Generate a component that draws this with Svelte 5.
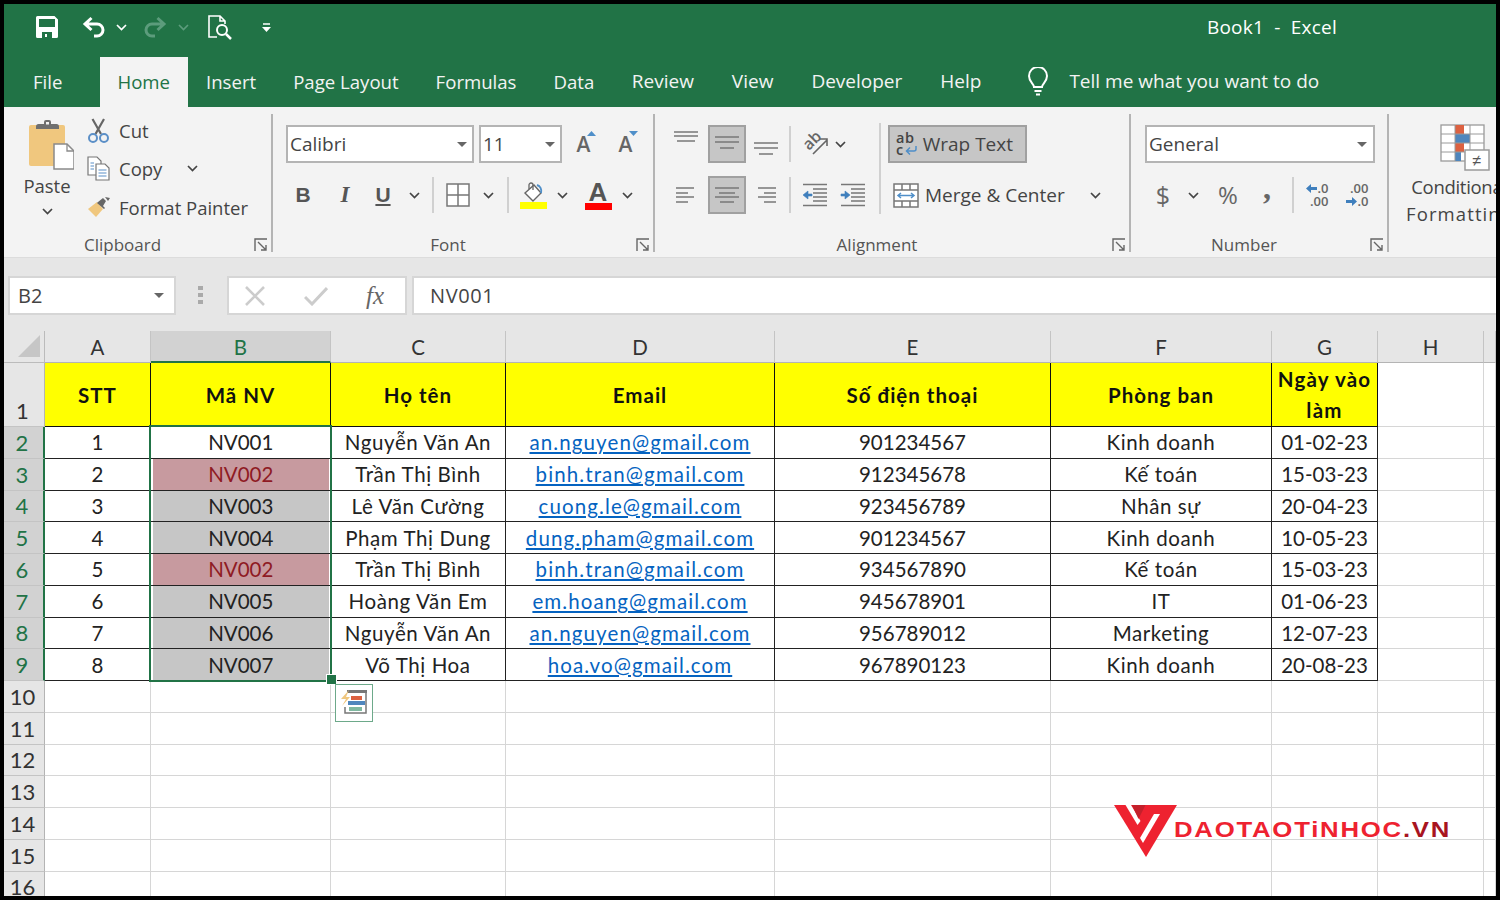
<script>
  // Excel window: Home ribbon over a staff list with duplicates highlighted in column B
  const tabs = ["Insert", "Page Layout", "Formulas", "Data", "Review", "View", "Developer", "Help"];
  const cols = ["A", "B", "C", "D", "E", "F", "G", "H"];
  const heads = ["STT", "Mã NV", "Họ tên", "Email", "Số điện thoại", "Phòng ban", "Ngày vào làm"];

  const staff = [
    [1, "NV001", "Nguyễn Văn An", "an.nguyen@gmail.com", "901234567", "Kinh doanh", "01-02-23", "plain"],
    [2, "NV002", "Trần Thị Bình", "binh.tran@gmail.com", "912345678", "Kế toán", "15-03-23", "dup"],
    [3, "NV003", "Lê Văn Cường", "cuong.le@gmail.com", "923456789", "Nhân sự", "20-04-23", "sel"],
    [4, "NV004", "Phạm Thị Dung", "dung.pham@gmail.com", "901234567", "Kinh doanh", "10-05-23", "sel"],
    [5, "NV002", "Trần Thị Bình", "binh.tran@gmail.com", "934567890", "Kế toán", "15-03-23", "dup"],
    [6, "NV005", "Hoàng Văn Em", "em.hoang@gmail.com", "945678901", "IT", "01-06-23", "sel"],
    [7, "NV006", "Nguyễn Văn An", "an.nguyen@gmail.com", "956789012", "Marketing", "12-07-23", "sel"],
    [8, "NV007", "Võ Thị Hoa", "hoa.vo@gmail.com", "967890123", "Kinh doanh", "20-08-23", "sel"],
  ];

  const emptyRows = [10, 11, 12, 13, 14, 15, 16];

  // [x1, x2, y] for the alignment glyphs
  const alignTop = [[1, 25, 2], [1, 25, 6], [4, 22, 11]];
  const alignMid = [[1, 25, 7], [1, 25, 12], [6, 20, 18]];
  const alignBot = [[1, 25, 13], [1, 25, 18], [6, 20, 24]];
  const alignLeft = [[3, 21, 5], [3, 15, 10], [3, 21, 14], [3, 15, 19]];
  const alignCenter = [[1, 25, 5], [5, 21, 10], [1, 25, 14], [6, 20, 19]];
  const alignRight = [[5, 23, 5], [11, 23, 10], [5, 23, 14], [11, 23, 19]];
</script>

{#snippet chev(color = "#444")}
  <svg class="chev" width="11" height="7" viewBox="0 0 11 7"><path d="M1 1l4.5 4.5L10 1" fill="none" stroke={color} stroke-width="1.7" /></svg>
{/snippet}

{#snippet drop()}
  <svg width="10" height="5" viewBox="0 0 10 5"><path d="M0 0h10L5 5z" fill="#666" /></svg>
{/snippet}

{#snippet launcher()}
  <svg class="launcher" width="14" height="14" viewBox="0 0 14 14" fill="none" stroke="#666" stroke-width="1.4"><path d="M13 1H1v12" /><path d="M4 4l8 8M12 7v5H7" /></svg>
{/snippet}

{#snippet lines(set, h = 24)}
  <svg width="26" height={h} viewBox="0 0 26 {h}"><g stroke="#777" stroke-width="1.5">{#each set as l}<line x1={l[0]} x2={l[1]} y1={l[2]} y2={l[2]} />{/each}</g></svg>
{/snippet}

<div class="window">
  <header class="titlebar">
    <div class="qat">
      <svg class="q-save" width="22" height="22" viewBox="0 0 22 22"><path fill-rule="evenodd" fill="#fff" d="M0 1.5A1.5 1.5 0 0 1 1.5 0h17L22 3.5v17a1.500 1.500 0 0 1-1.500 1.500h-19A1.500 1.500 0 0 1 0 20.500zM3 3v8h16V3zM6 16v6h10v-6zM9 18h2v3H9z" /></svg>
      <svg class="q-undo" width="24" height="22" viewBox="0 0 24 22" fill="none" stroke="#fff" stroke-width="3"><path d="M9.500 2L3 8l6.500 6M3 8h12a6 6 0 0 1 0 12h-3" /></svg>
      <span class="q-chev">{@render chev("#fff")}</span>
      <svg class="q-redo" width="24" height="22" viewBox="0 0 24 22" fill="none" stroke="#5c9c7c" stroke-width="3"><path d="M14.500 2L21 8l-6.500 6M21 8H9a6 6 0 0 0 0 12h3" /></svg>
      <span class="q-chev dim">{@render chev("#5c9c7c")}</span>
      <svg class="q-preview" width="25" height="25" viewBox="0 0 25 25" fill="none" stroke="#fff" stroke-width="1.600"><path d="M9 22H1V1h11l5 5v3M12 1v5h5" /><circle cx="14" cy="15" r="5" stroke-width="2" /><path d="M18 19l5 5" stroke-width="2.500" /></svg>
      <svg class="q-more" width="9" height="9" viewBox="0 0 9 9"><path d="M1 1h7" stroke="#fff" stroke-width="1.500" /><path d="M0 4h9L4.500 9z" fill="#fff" /></svg>
    </div>
    <div class="doc-title">Book1&nbsp; -&nbsp; Excel</div>
  </header>

  <nav class="tabs">
    <span class="tab file">File</span>
    <span class="tab home">Home</span>
    {#each tabs as t}
      <span class="tab">{t}</span>
    {/each}
    <svg class="bulb" width="22" height="29" viewBox="0 0 22 29" fill="none" stroke="#fff" stroke-width="2"><path d="M7 20c0-3-5-5-5-11a9 9 0 0 1 18 0c0 6-5 8-5 11z" /><path d="M7.500 24h7M9 27.500h4" /></svg>
    <span class="tell">Tell me what you want to do</span>
  </nav>

  <section class="ribbon">
    <div class="group clipboard">
      <div class="group-body">
        <div class="paste">
          <svg width="50" height="52" viewBox="0 0 50 52">
            <rect x="5" y="7" width="36" height="41" rx="2" fill="#f0c77e" />
            <path d="M12 11V8.500A2.500 2.500 0 0 1 14.500 6H20V4a2 2 0 0 1 2-2h3a2 2 0 0 1 2 2v2h5.500A2.500 2.500 0 0 1 35 8.500V11z" fill="#6f6f6f" />
            <rect x="22" y="4" width="3" height="2.500" fill="#f3f3f3" />
            <path d="M30 26h13l7 7v18H30z" fill="#fff" stroke="#8a8a8a" stroke-width="1.500" />
            <path d="M43 26v7h7" fill="none" stroke="#8a8a8a" stroke-width="1.300" />
          </svg>
          <span class="paste-label">Paste</span>
          {@render chev()}
        </div>
        <ul class="clip-list">
          <li>
            <svg width="24" height="25" viewBox="0 0 24 25" fill="none"><path d="M5.500 1L14 16M17 1L8.500 16" stroke="#666" stroke-width="2.200" /><circle cx="6" cy="20" r="4" stroke="#5b8fc7" stroke-width="2" /><circle cx="17" cy="20" r="4" stroke="#5b8fc7" stroke-width="2" /></svg>
            <span>Cut</span>
          </li>
          <li>
            <svg width="24" height="25" viewBox="0 0 24 25" fill="#fff" stroke="#777" stroke-width="1.200"><path d="M1 1h9l4 4v14H1z" /><path d="M9 8h9l4 4v12H9z" /><g stroke="#5b8fc7"><path d="M3.500 7H7M3.500 10H7M3.500 13H7M11.500 14h8M11.500 17h8M11.500 20h8" /></g></svg>
            <span>Copy</span>
            <span class="copy-chev">{@render chev()}</span>
          </li>
          <li>
            <svg width="24" height="22" viewBox="0 0 24 22"><path d="M1 13l9-7 6 7-7 8z" fill="#f0c77e" /><path d="M11 6l5-4 3 3-3 5 2 2-1 1-7-6z" fill="#666" /><path d="M18 1l5 1-2 3z" fill="#666" /></svg>
            <span>Format Painter</span>
          </li>
        </ul>
      </div>
      <div class="group-foot">Clipboard {@render launcher()}</div>
    </div>

    <div class="group font">
      <div class="group-body stack">
        <div class="row font-r1">
          <div class="box name-box"><span>Calibri</span>{@render drop()}</div>
          <div class="box size-box"><span>11</span>{@render drop()}</div>
          <span class="grow-a">A<svg width="9" height="5" viewBox="0 0 9 5"><path d="M0 5h9L4.500 0z" fill="#4f8fc9" /></svg></span>
          <span class="grow-a small">A<svg width="9" height="5" viewBox="0 0 9 5"><path d="M0 0h9L4.500 5z" fill="#4f8fc9" /></svg></span>
        </div>
        <div class="row font-r2">
          <b class="bold">B</b>
          <i class="ital">I</i>
          <u class="under">U</u>
          {@render chev()}
          <span class="sep"></span>
          <svg width="24" height="24" viewBox="0 0 24 24" fill="#fff" stroke="#777" stroke-width="1.500"><rect x="1" y="1" width="22" height="22" /><path d="M12 1v22M1 12h22" /></svg>
          {@render chev()}
          <span class="sep"></span>
          <svg class="fill-can" width="27" height="27" viewBox="0 0 27 27"><path d="M5 11l9-8 7 8-8 8z" fill="#fff" stroke="#666" stroke-width="1.400" /><path d="M9 7V3a2 2 0 0 1 4 0v5" fill="none" stroke="#666" stroke-width="1.300" /><path d="M17 3c3 1 5 4 4 8" fill="none" stroke="#4f8fc9" stroke-width="2" /><rect y="20" width="27" height="7" fill="#ff0" /></svg>
          {@render chev()}
          <span class="font-color">A</span>
          {@render chev()}
        </div>
      </div>
      <div class="group-foot">Font {@render launcher()}</div>
    </div>

    <div class="group alignment">
      <div class="group-body stack">
        <div class="row align-r1">
          {@render lines(alignTop, 28)}
          <span class="toggle">{@render lines(alignMid, 28)}</span>
          {@render lines(alignBot, 28)}
          <span class="sep"></span>
          <span class="orient"><span class="orient-ab">ab</span><svg width="26" height="28" viewBox="0 0 26 28" fill="none" stroke="#666" stroke-width="1.600"><path d="M11 24L25 10M18 9h7v7" /></svg></span>
          {@render chev()}
          <span></span>
          <span class="sep long"></span>
          <div class="wrap-btn">
            <span class="abc"><span>ab</span><span class="abc-c">c<svg width="12" height="9" viewBox="0 0 12 9" fill="none" stroke="#4f8fc9" stroke-width="1.500"><path d="M11 0v3a2 2 0 0 1-2 2H2M5 1.500L1.500 5 5 8.500" /></svg></span></span>
            Wrap Text
          </div>
        </div>
        <div class="row align-r2">
          {@render lines(alignLeft)}
          <span class="toggle">{@render lines(alignCenter)}</span>
          {@render lines(alignRight)}
          <span class="sep"></span>
          <svg width="26" height="24" viewBox="0 0 26 24"><g stroke="#777" stroke-width="1.500"><path d="M1 1.500h24M11 6h14M11 10h14M11 14h14M11 18h14M1 22.500h24" /></g><path d="M1 12l5-4v3h4v2H6v3z" fill="#3f7fbd" stroke="#3f7fbd" stroke-width=".6" /></svg>
          <svg width="26" height="24" viewBox="0 0 26 24"><g stroke="#777" stroke-width="1.500"><path d="M1 1.500h24M11 6h14M11 10h14M11 14h14M11 18h14M1 22.500h24" /></g><path d="M10 12L5 8v3H1v2h4v3z" fill="#3f7fbd" stroke="#3f7fbd" stroke-width=".6" /></svg>
          <span></span>
          <div class="merge-btn">
            <svg width="26" height="25" viewBox="0 0 26 25" fill="#fff" stroke="#777" stroke-width="1.500"><rect x="1" y="1" width="24" height="23" /><path d="M1 7h24M1 18h24M9 1v6M17 1v6M9 18v6M17 18v6" /><path d="M5 12.500h16M8 10l-3 2.500L8 15M18 10l3 2.500L18 15" fill="none" stroke="#4f8fc9" /></svg>
            <span class="merge-label">Merge &amp; Center</span>
            {@render chev()}
          </div>
        </div>
      </div>
      <div class="group-foot">Alignment {@render launcher()}</div>
    </div>

    <div class="group number">
      <div class="group-body stack">
        <div class="row number-r1">
          <div class="box general-box"><span>General</span>{@render drop()}</div>
        </div>
        <div class="row number-r2">
          <span class="num-sym dollar">$</span>
          {@render chev()}
          <span class="num-sym">%</span>
          <span class="num-sym comma">,</span>
          <span class="sep"></span>
          <span class="dec"><span class="dec-top"><svg width="11" height="9" viewBox="0 0 11 9"><path d="M0 4.500L5 0v3h6v3H5v3z" fill="#3f7fbd" /></svg>.0</span><span>.00</span></span>
          <span class="dec"><span>.00</span><span class="dec-top"><svg width="11" height="9" viewBox="0 0 11 9"><path d="M11 4.500L6 0v3H0v3h6v3z" fill="#3f7fbd" /></svg>.0</span></span>
        </div>
      </div>
      <div class="group-foot">Number {@render launcher()}</div>
    </div>

    <div class="cond">
      <svg width="50" height="48" viewBox="0 0 50 48">
        <g fill="#fff" stroke="#9a9a9a" stroke-width="1.300"><rect x="1" y="1" width="43" height="36" /></g>
        <rect x="15" y="1" width="9" height="9" fill="#dc6141" />
        <rect x="15" y="10" width="15" height="9" fill="#4f86bd" />
        <rect x="15" y="19" width="9" height="9" fill="#dc6141" />
        <rect x="15" y="28" width="6" height="9" fill="#4f86bd" />
        <path d="M1 10h43M1 19h43M1 28h43M15 1v36M30 1v36" stroke="#9a9a9a" stroke-width="1" fill="none" />
        <rect x="25" y="26" width="24" height="20" fill="#fff" stroke="#9a9a9a" stroke-width="1.500" />
        <text x="37" y="42" font-size="16" text-anchor="middle" fill="#555" font-family="Liberation Sans, sans-serif">≠</text>
      </svg>
      <span class="cond-a">Conditional</span>
      <span class="cond-b">Formatting</span>
    </div>
  </section>

  <div class="formula-bar">
    <div class="fbox name"><span>B2</span>{@render drop()}</div>
    <svg class="grip" width="6" height="18" viewBox="0 0 6 18" fill="#aaa"><rect width="5" height="4" /><rect y="7" width="5" height="4" /><rect y="14" width="5" height="4" /></svg>
    <div class="fbox actions">
      <svg width="22" height="20" viewBox="0 0 22 20" fill="none" stroke="#ccc" stroke-width="2.600"><path d="M2 1l18 18M20 1L2 19" /></svg>
      <svg width="24" height="20" viewBox="0 0 24 20" fill="none" stroke="#ccc" stroke-width="3"><path d="M1 11l7 7L23 2" /></svg>
      <span class="fx">fx</span>
    </div>
    <div class="fbox input">NV001</div>
  </div>

  <div class="sheet">
    <div class="corner"><svg width="22" height="22" viewBox="0 0 22 22"><path d="M22 0v22H0z" fill="#c6c6c6" /></svg></div>
    {#each cols as c}
      <div class="col-head" class:active={c === "B"}>{c}</div>
    {/each}
    <div class="col-head"></div>

    <div class="row-head first">1</div>
    {#each heads as h, i}
      <div class="cell head" class:wrap={i === 6}>{h}</div>
    {/each}
    <div class="cell"></div>
    <div class="cell"></div>

    {#each staff as p, r}
      <div class="row-head active">{r + 2}</div>
      <div class="cell data">{p[0]}</div>
      <div class="cell data code"><span class="code-fill {p[7]}">{p[1]}</span></div>
      <div class="cell data words">{p[2]}</div>
      <div class="cell data"><a href="#top" class="mail">{p[3]}</a></div>
      <div class="cell data">{p[4]}</div>
      <div class="cell data words">{p[5]}</div>
      <div class="cell data">{p[6]}</div>
      <div class="cell"></div>
      <div class="cell"></div>
    {/each}

    {#each emptyRows as n}
      <div class="row-head">{n}</div>
      {#each Array(9) as _}
        <div class="cell"></div>
      {/each}
    {/each}

    <div class="selection"></div>
    <div class="handle"></div>
    <div class="quick">
      <svg width="28" height="26" viewBox="0 0 28 26">
        <path d="M9 1H26v22H5v-6" fill="none" stroke="#777" stroke-width="1.500" />
        <rect x="7" y="0" width="20" height="3" fill="#777" />
        <rect x="11" y="6" width="11" height="4" fill="#dc6141" />
        <rect x="8" y="11" width="17" height="4" fill="#4f86bd" />
        <rect x="9" y="17" width="13" height="4" fill="#7fb8a0" />
        <path d="M9 0L1 9h5l-4 7 8-9H6z" fill="#f0c77e" />
      </svg>
    </div>

    <div class="logo">
      <svg width="65" height="55" viewBox="0 0 65 55">
        <path d="M0 0h63L32 52z" fill="#ee2230" />
        <path d="M11.500 0h5.500l9.500 16-3 4z" fill="#fff" />
        <path d="M18 0h13.500L24.500 14z" fill="#c4202b" />
        <path d="M40 9h6L29 38l-3-5z" fill="#fff" />
      </svg>
      <span class="logo-text">DAOTAOTiNHOC<span class="vn">.VN</span></span>
    </div>
  </div>
</div>

<style>
  :global(body) {
    margin: 0;
    background: #000;
  }

  .window {
    box-sizing: border-box;
    width: 1492px;
    height: 892px;
    margin: 4px;
    overflow: hidden;
    background: #e6e6e6;
    font-family: "Open Sans", "Noto Sans", sans-serif;
    color: #444;
  }

  .titlebar {
    display: flex;
    align-items: center;
    box-sizing: border-box;
    height: 53px;
    padding-bottom: 7px;
    background: #217346;
    color: #fff;
  }

  .qat {
    display: flex;
    align-items: center;
    margin-left: 32px;
  }
  .q-undo { margin-left: 24px; }
  .q-chev { margin-left: 10px; display: flex; }
  .q-redo { margin-left: 16px; }
  .q-chev.dim { margin-left: 11px; }
  .q-preview { margin-left: 19px; }
  .q-more { margin-left: 29px; }

  .doc-title {
    margin-left: 936px;
    font-size: 19px;
    letter-spacing: 0.2px;
    white-space: nowrap;
  }

  .tabs {
    display: flex;
    align-items: stretch;
    height: 50px;
    padding-bottom: 2px;
    box-sizing: border-box;
    background: #217346;
    color: #f3f3f3;
    font-size: 18.600px;
  }

  .tab {
    display: flex;
    align-items: center;
    padding: 0 18.5px;
    white-space: nowrap;
  }
  .tab:nth-child(n + 7) {
    padding: 0 19px;
    font-size: 19px;
  }
  .tab.file { padding: 0 0 0 29px; margin-right: 37.500px; }
  .tab.home {
    margin-bottom: -2px;
    padding: 0 17.500px 2px;
    background: #f3f3f3;
    color: #217346;
  }

  .bulb {
    align-self: center;
    margin: 0 20px 0 27px;
  }

  .tell {
    align-self: center;
    font-size: 19px;
    white-space: nowrap;
  }

  .ribbon {
    display: flex;
    box-sizing: border-box;
    height: 151px;
    padding-top: 7px;
    background: #f3f3f3;
    border-bottom: 1px solid #dcdcdc;
  }

  .group {
    position: relative;
    display: flex;
    flex: none;
    flex-direction: column;
    box-sizing: border-box;
    height: 138px;
    border-right: 2px solid #b4b4b4;
  }
  .clipboard { width: 269px; }
  .font { width: 382px; }
  .alignment { width: 476px; }
  .number { width: 258px; }

  .group-body {
    display: flex;
    box-sizing: border-box;
    height: 118px;
    padding-top: 11px;
    font-size: 19px;
  }
  .group-body.stack {
    flex-direction: column;
    gap: 13px;
  }

  .group-foot {
    position: relative;
    height: 20px;
    padding-right: 30px;
    text-align: center;
    font-size: 17px;
    line-height: 26px;
    color: #555;
  }
  .launcher {
    position: absolute;
    right: 3px;
    top: 6px;
  }

  .row {
    display: grid;
    grid-template-rows: 38px;
    align-items: center;
    justify-items: center;
    height: 38px;
  }

  .sep {
    width: 1.500px;
    height: 36px;
    background: #d0d0d0;
  }
  .sep.long {
    align-self: start;
    height: 91px;
    margin-top: -2px;
  }

  .paste {
    display: flex;
    flex-direction: column;
    align-items: center;
    width: 72px;
    margin: -7px 0 0 7px;
  }
  .paste svg:first-child { margin-left: 4px; }
  .paste-label {
    margin-top: 3px;
    font-size: 18.500px;
    line-height: 26px;
  }
  .paste .chev { margin-top: 9px; }

  .clip-list {
    list-style: none;
    margin: -9px 0 0 4px;
    padding: 0;
    display: flex;
    flex-direction: column;
    gap: 10.500px;
  }
  .clip-list li {
    display: flex;
    align-items: center;
    gap: 8px;
    height: 28px;
    font-size: 18.500px;
    white-space: nowrap;
  }
  .copy-chev {
    display: flex;
    margin-left: 17px;
  }

  .box {
    display: flex;
    align-items: center;
    justify-content: space-between;
    justify-self: stretch;
    box-sizing: border-box;
    height: 38px;
    padding: 0 5px 0 2px;
    background: #fff;
    border: 2px solid #b4b4b4;
    font-size: 19px;
  }

  .font-r1 {
    grid-template-columns: 188px 83px 42px 38px;
    column-gap: 5px;
    margin-left: 13px;
    width: max-content;
  }
  .grow-a {
    position: relative;
    margin-left: -9px;
    font-size: 21px;
    font-weight: 600;
    line-height: 28px;
    color: #666;
  }
  .grow-a.small { margin-left: -15px; }
  .grow-a svg {
    position: absolute;
    right: -6px;
    top: 1px;
  }

  .font-r2 {
    grid-template-columns: 38px 46px 30px 32px 6px 44px 16px 24px 26px 32px 40px 18px;
    margin-left: 11px;
    width: max-content;
  }
  .bold, .ital, .under {
    font-family: "Liberation Sans", sans-serif;
    font-size: 21px;
    color: #555;
    font-weight: 700;
  }
  .ital { font-family: "Liberation Serif", serif; font-size: 23px; }
  .fill-can { margin-top: 1px; }
  .font-color {
    box-sizing: border-box;
    width: 27px;
    height: 30px;
    border-bottom: 7px solid #f00;
    text-align: center;
    font-family: "Liberation Sans", sans-serif;
    font-size: 26px;
    font-weight: 700;
    line-height: 24px;
    color: #555;
  }

  .align-r1,
  .align-r2 {
    margin-left: 13px;
    width: max-content;
  }
  .align-r1 { grid-template-columns: 36px 45px 34px 14px 36px 14px 26px 14px 140px; }
  .align-r2 { grid-template-columns: 36px 45px 34px 14px 36px 40px 14px 240px; }

  .toggle {
    display: flex;
    align-items: center;
    justify-content: center;
    box-sizing: border-box;
    width: 38px;
    height: 38px;
    background: #c6c6c6;
    border: 2px solid #a0a0a0;
  }

  .orient {
    position: relative;
    display: block;
    width: 26px;
    height: 28px;
  }
  .orient svg {
    position: absolute;
    left: 0;
    top: 0;
  }
  .orient-ab {
    position: absolute;
    left: 0;
    top: 1px;
    font-size: 16px;
    line-height: 18px;
    transform: rotate(-45deg);
    font-weight: 600;
    color: #666;
  }

  .wrap-btn {
    display: flex;
    align-items: center;
    gap: 6px;
    box-sizing: border-box;
    justify-self: start;
    width: 139px;
    height: 38px;
    margin-left: 1px;
    padding-left: 6px;
    background: #c6c6c6;
    border: 2px solid #a0a0a0;
    font-size: 19px;
    white-space: nowrap;
  }
  .abc {
    display: flex;
    flex-direction: column;
    font-size: 14.500px;
    line-height: 12px;
    font-weight: 600;
    letter-spacing: 0.5px;
  }
  .abc-c {
    display: flex;
    align-items: center;
    gap: 1px;
  }

  .merge-btn {
    display: flex;
    align-items: center;
    justify-self: start;
    margin-left: 6px;
    white-space: nowrap;
  }
  .merge-label {
    width: 165px;
    margin-left: 6px;
    font-size: 19px;
  }

  .number-r1 {
    grid-template-columns: 230px;
    margin-left: 14px;
    width: max-content;
  }
  .general-box { width: 230px; padding-right: 6px; }

  .number-r2 {
    grid-template-columns: 36px 24px 46px 32px 20px 28px 52px;
    margin-left: 14px;
    width: max-content;
  }
  .num-sym {
    font-size: 24px;
    line-height: 28px;
    color: #666;
  }
  .dollar { font-size: 25px; }
  .comma {
    margin-top: -14px;
    font-family: "Liberation Serif", serif;
    font-size: 32px;
    font-weight: 700;
  }
  .dec {
    display: flex;
    flex-direction: column;
    align-items: flex-end;
    font-size: 13px;
    line-height: 13px;
    font-weight: 600;
    color: #666;
  }
  .dec-top {
    display: flex;
    align-items: center;
    gap: 1px;
  }

  .cond {
    display: flex;
    flex-direction: column;
    align-items: center;
    flex: none;
    width: 140px;
    padding-top: 10px;
    font-size: 18.500px;
    line-height: 27px;
    white-space: nowrap;
  }
  .cond svg { margin: 0 0 1px 12px; }
  .cond-a { letter-spacing: -0.3px; }
  .cond-b { letter-spacing: 1.100px; }

  .formula-bar {
    display: flex;
    align-items: flex-start;
    height: 73px;
    padding-top: 18px;
    box-sizing: border-box;
    background: #e6e6e6;
  }

  .fbox {
    display: flex;
    align-items: center;
    box-sizing: border-box;
    height: 39px;
    background: #fff;
    border: 2px solid #d6d6d6;
    font-size: 20px;
  }
  .fbox.name {
    justify-content: space-between;
    width: 168px;
    margin-left: 4px;
    padding: 0 10px 0 8px;
  }
  .grip { margin: 10px 0 0 22px; }
  .fbox.actions {
    justify-content: space-between;
    width: 180px;
    margin-left: 23px;
    padding: 0 21px 0 15px;
  }
  .fx {
    font-family: "Liberation Serif", serif;
    font-style: italic;
    font-size: 25px;
    color: #666;
  }
  .fbox.input {
    flex: 1;
    margin-left: 5px;
    padding-left: 16px;
    border-right: 0;
    letter-spacing: 0.6px;
  }

  .sheet {
    position: relative;
    display: grid;
    grid-template-columns: 41px 106px 180px 175px 269px 276px 221px 106px 106px 1fr;
    grid-template-rows: 32px 64px repeat(15, 31.750px);
    background: #fff;
    font-family: Lato, "Open Sans", sans-serif;
    font-size: 20.500px;
    color: #222;
  }

  .corner {
    display: flex;
    align-items: flex-end;
    justify-content: flex-end;
    box-sizing: border-box;
    padding: 0 4px 5px 0;
    background: #e6e6e6;
    border-right: 1px solid #bbb;
    border-bottom: 1px solid #bbb;
  }

  .col-head {
    display: flex;
    align-items: center;
    justify-content: center;
    box-sizing: border-box;
    background: #e6e6e6;
    border-right: 1.500px solid #c4c4c4;
    border-bottom: 1.500px solid #b4b4b4;
    padding-top: 1px;
    color: #333;
  }
  .col-head.active {
    background: #d2d2d2;
    color: #217346;
    border-bottom: 2.500px solid #217346;
  }

  .row-head {
    display: flex;
    align-items: center;
    justify-content: center;
    box-sizing: border-box;
    padding-right: 3px;
    background: #e6e6e6;
    border-right: 1.500px solid #b4b4b4;
    border-bottom: 1.500px solid #c4c4c4;
    font-size: 22px;
    color: #333;
  }
  .row-head.first {
    align-items: flex-end;
    padding-bottom: 2px;
  }
  .row-head.active {
    background: #d2d2d2;
    color: #217346;
    border-right: 2.500px solid #217346;
  }

  .cell {
    display: flex;
    align-items: center;
    justify-content: center;
    box-sizing: border-box;
    border-right: 1.500px solid #d6d6d6;
    border-bottom: 1.500px solid #d6d6d6;
    white-space: nowrap;
  }
  .cell.head {
    background: #ff0;
    border-color: #111;
    font-weight: 700;
    letter-spacing: 1px;
    color: #111;
  }
  .cell.head.wrap {
    white-space: normal;
    text-align: center;
    line-height: 31px;
    padding: 0 1px;
    letter-spacing: 1.200px;
  }
  .cell.data {
    border-color: #222;
  }
  .cell.words { letter-spacing: 0.6px; }

  .code { padding: 0 1.500px 0 2px; }
  .code-fill {
    display: flex;
    align-items: center;
    justify-content: center;
    width: 100%;
    height: 100%;
  }
  .code-fill.dup {
    background: #c79a9f;
    color: #8f1a24;
  }
  .code-fill.sel {
    background: #c6c6c6;
  }

  .mail {
    color: #0563c1;
    letter-spacing: 1.100px;
    text-decoration: underline;
    text-underline-offset: 2px;
  }

  .selection {
    position: absolute;
    left: 145px;
    top: 94px;
    box-sizing: border-box;
    width: 183px;
    height: 257px;
    border: 2.500px solid #217346;
    pointer-events: none;
  }

  .handle {
    position: absolute;
    left: 322.500px;
    top: 344px;
    box-sizing: border-box;
    width: 9px;
    height: 9px;
    background: #217346;
    outline: 1px solid #fff;
  }

  .quick {
    position: absolute;
    left: 331px;
    top: 353px;
    display: flex;
    align-items: center;
    justify-content: center;
    box-sizing: border-box;
    width: 38px;
    height: 38px;
    background: #fff;
    border: 1.500px solid #6da98a;
  }

  .logo {
    position: absolute;
    left: 1110px;
    top: 474px;
    display: flex;
    align-items: flex-start;
  }
  .logo-text {
    margin: 13px 0 0 -5px;
    font-family: "Liberation Sans", sans-serif;
    font-size: 22px;
    font-weight: 700;
    line-height: 24px;
    color: #ee2230;
    white-space: nowrap;
    letter-spacing: 1.500px;
    transform: scaleX(1.170);
    transform-origin: left center;
  }
  .vn { color: #a8141f; }
</style>
